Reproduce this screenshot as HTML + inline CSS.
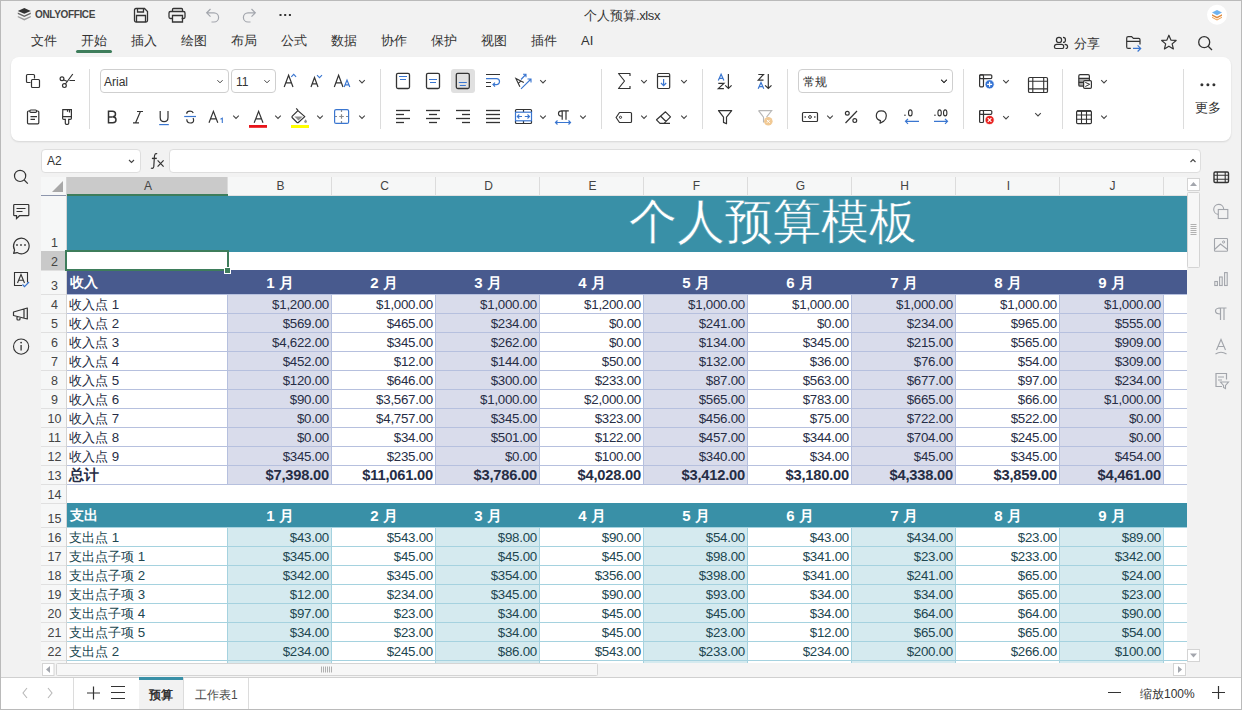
<!DOCTYPE html><html><head><meta charset="utf-8"><style>
*{box-sizing:border-box;margin:0;padding:0}
html,body{width:1242px;height:710px;overflow:hidden;background:#f2f2f2;font-family:"Liberation Sans",sans-serif;color:#333}
.ab{position:absolute}
#frame{position:absolute;left:0;top:0;width:1242px;height:710px;border:1px solid #bababa;pointer-events:none;z-index:50}
.tab{position:absolute;top:33px;font-size:13px;color:#333;line-height:16px}
.panel{position:absolute;left:11px;top:57px;width:1220px;height:84px;background:#fff;border-radius:8px;box-shadow:0 1px 2px rgba(0,0,0,.12)}
.sep{position:absolute;width:1px;background:#dcdcdc}
.ic{position:absolute}
.dd{position:absolute}
.combo{position:absolute;border:1px solid #cfcfcf;border-radius:4px;background:#fff;font-size:12px;color:#333}
.cell{position:absolute;height:19px;font-size:13.3px;line-height:19px;white-space:nowrap;color:#2e3442}
.num{letter-spacing:-0.25px}
.tot{font-weight:bold;font-size:14.7px;letter-spacing:-0.2px;color:#1e2433}
.num{text-align:right}
.rn{position:absolute;left:41px;width:26px;padding-left:1px;text-align:center;font-size:12.5px;color:#444}
.ch{position:absolute;top:177px;height:18px;padding-left:2px;text-align:center;font-size:12px;line-height:18px;color:#444}
</style></head><body>
<div id="frame"></div>
<div class="ab" style="left:35px;top:9px;font-size:10px;font-weight:bold;color:#444;letter-spacing:-0.35px">ONLYOFFICE</div>
<div class="ab" style="left:584px;top:7px;font-size:13px;color:#333">个人预算<span style="letter-spacing:-0.4px">.xlsx</span></div>
<div class="tab" style="left:31px">文件</div>
<div class="tab" style="left:81px">开始</div>
<div class="tab" style="left:131px">插入</div>
<div class="tab" style="left:181px">绘图</div>
<div class="tab" style="left:231px">布局</div>
<div class="tab" style="left:281px">公式</div>
<div class="tab" style="left:331px">数据</div>
<div class="tab" style="left:381px">协作</div>
<div class="tab" style="left:431px">保护</div>
<div class="tab" style="left:481px">视图</div>
<div class="tab" style="left:531px">插件</div>
<div class="tab" style="left:581px">AI</div>
<div class="ab" style="left:76px;top:50px;width:36px;height:3px;border-radius:2px;background:#3e7d5b"></div>
<div class="ab" style="left:1074px;top:35px;font-size:13px;color:#333">分享</div>
<div class="panel"></div>
<div class="sep" style="left:89px;top:69px;height:60px"></div>
<div class="sep" style="left:380px;top:69px;height:60px"></div>
<div class="sep" style="left:601px;top:69px;height:60px"></div>
<div class="sep" style="left:702px;top:69px;height:60px"></div>
<div class="sep" style="left:787px;top:69px;height:60px"></div>
<div class="sep" style="left:963px;top:69px;height:60px"></div>
<div class="sep" style="left:1062px;top:69px;height:60px"></div>
<div class="sep" style="left:1183px;top:69px;height:60px"></div>
<div class="combo" style="left:100px;top:69px;width:129px;height:24px;padding:5px 0 0 3px">Arial</div>
<div class="combo" style="left:231px;top:69px;width:45px;height:24px;padding:5px 0 0 4px">11</div>
<div class="combo" style="left:798px;top:69px;width:155px;height:24px;padding:4px 0 0 4px">常规</div>
<div class="ab" style="left:1195px;top:100px;font-size:12.5px;color:#333">更多</div>
<div class="combo" style="left:41px;top:149px;width:100px;height:24px;padding:4px 0 0 5px;border-color:#dedede">A2</div>
<div class="combo" style="left:169px;top:149px;width:1032px;height:24px;border-color:#dedede"></div>
<div class="ab" style="left:41px;top:177px;width:1146px;height:486px;background:#fff"></div>
<div class="ab" style="left:41px;top:177px;width:1146px;height:18px;background:#f6f7f7"></div>
<div class="ab" style="left:67px;top:177px;width:161px;height:18px;background:#cacaca"></div>
<div class="ch" style="left:67px;width:160px">A</div>
<div class="ab" style="left:227px;top:177px;width:1px;height:18px;background:#dcdcdc"></div>
<div class="ch" style="left:228px;width:103px">B</div>
<div class="ab" style="left:331px;top:177px;width:1px;height:18px;background:#dcdcdc"></div>
<div class="ch" style="left:332px;width:103px">C</div>
<div class="ab" style="left:435px;top:177px;width:1px;height:18px;background:#dcdcdc"></div>
<div class="ch" style="left:436px;width:103px">D</div>
<div class="ab" style="left:539px;top:177px;width:1px;height:18px;background:#dcdcdc"></div>
<div class="ch" style="left:540px;width:103px">E</div>
<div class="ab" style="left:643px;top:177px;width:1px;height:18px;background:#dcdcdc"></div>
<div class="ch" style="left:644px;width:103px">F</div>
<div class="ab" style="left:747px;top:177px;width:1px;height:18px;background:#dcdcdc"></div>
<div class="ch" style="left:748px;width:103px">G</div>
<div class="ab" style="left:851px;top:177px;width:1px;height:18px;background:#dcdcdc"></div>
<div class="ch" style="left:852px;width:103px">H</div>
<div class="ab" style="left:955px;top:177px;width:1px;height:18px;background:#dcdcdc"></div>
<div class="ch" style="left:956px;width:103px">I</div>
<div class="ab" style="left:1059px;top:177px;width:1px;height:18px;background:#dcdcdc"></div>
<div class="ch" style="left:1060px;width:103px">J</div>
<div class="ab" style="left:1163px;top:177px;width:1px;height:18px;background:#dcdcdc"></div>
<div class="ab" style="left:67px;top:195px;width:1120px;height:1px;background:#e2e2e2"></div>
<div class="ab" style="left:41px;top:195px;width:26px;height:1px;background:#8d96ad"></div>
<div class="ab" style="left:67px;top:194px;width:161px;height:2px;background:#3e7d5b"></div>
<div class="ab" style="left:41px;top:196px;width:26px;height:467px;background:#f6f7f7"></div>
<div class="ab" style="left:66px;top:177px;width:1px;height:486px;background:#d4d4d4"></div>
<svg class="ab" style="left:52px;top:181px" width="12" height="12"><path d="M11 0 L11 11 L0 11Z" fill="#a8a8a8"/></svg>
<div class="rn" style="top:236px;line-height:14px">1</div>
<div class="ab" style="left:41px;top:251px;width:25px;height:1px;background:#e0e0e0"></div>
<div class="ab" style="left:41px;top:251px;width:25px;height:19px;background:#c9c9c9"></div>
<div class="rn" style="top:255px;line-height:14px">2</div>
<div class="ab" style="left:41px;top:270px;width:25px;height:1px;background:#e0e0e0"></div>
<div class="rn" style="top:279px;line-height:14px">3</div>
<div class="ab" style="left:41px;top:294px;width:25px;height:1px;background:#e0e0e0"></div>
<div class="rn" style="top:298px;line-height:14px">4</div>
<div class="ab" style="left:41px;top:313px;width:25px;height:1px;background:#e0e0e0"></div>
<div class="rn" style="top:317px;line-height:14px">5</div>
<div class="ab" style="left:41px;top:332px;width:25px;height:1px;background:#e0e0e0"></div>
<div class="rn" style="top:336px;line-height:14px">6</div>
<div class="ab" style="left:41px;top:351px;width:25px;height:1px;background:#e0e0e0"></div>
<div class="rn" style="top:355px;line-height:14px">7</div>
<div class="ab" style="left:41px;top:370px;width:25px;height:1px;background:#e0e0e0"></div>
<div class="rn" style="top:374px;line-height:14px">8</div>
<div class="ab" style="left:41px;top:389px;width:25px;height:1px;background:#e0e0e0"></div>
<div class="rn" style="top:393px;line-height:14px">9</div>
<div class="ab" style="left:41px;top:408px;width:25px;height:1px;background:#e0e0e0"></div>
<div class="rn" style="top:412px;line-height:14px">10</div>
<div class="ab" style="left:41px;top:427px;width:25px;height:1px;background:#e0e0e0"></div>
<div class="rn" style="top:431px;line-height:14px">11</div>
<div class="ab" style="left:41px;top:446px;width:25px;height:1px;background:#e0e0e0"></div>
<div class="rn" style="top:450px;line-height:14px">12</div>
<div class="ab" style="left:41px;top:465px;width:25px;height:1px;background:#e0e0e0"></div>
<div class="rn" style="top:469px;line-height:14px">13</div>
<div class="ab" style="left:41px;top:484px;width:25px;height:1px;background:#e0e0e0"></div>
<div class="rn" style="top:488px;line-height:14px">14</div>
<div class="ab" style="left:41px;top:503px;width:25px;height:1px;background:#e0e0e0"></div>
<div class="rn" style="top:512px;line-height:14px">15</div>
<div class="ab" style="left:41px;top:527px;width:25px;height:1px;background:#e0e0e0"></div>
<div class="rn" style="top:531px;line-height:14px">16</div>
<div class="ab" style="left:41px;top:546px;width:25px;height:1px;background:#e0e0e0"></div>
<div class="rn" style="top:550px;line-height:14px">17</div>
<div class="ab" style="left:41px;top:565px;width:25px;height:1px;background:#e0e0e0"></div>
<div class="rn" style="top:569px;line-height:14px">18</div>
<div class="ab" style="left:41px;top:584px;width:25px;height:1px;background:#e0e0e0"></div>
<div class="rn" style="top:588px;line-height:14px">19</div>
<div class="ab" style="left:41px;top:603px;width:25px;height:1px;background:#e0e0e0"></div>
<div class="rn" style="top:607px;line-height:14px">20</div>
<div class="ab" style="left:41px;top:622px;width:25px;height:1px;background:#e0e0e0"></div>
<div class="rn" style="top:626px;line-height:14px">21</div>
<div class="ab" style="left:41px;top:641px;width:25px;height:1px;background:#e0e0e0"></div>
<div class="rn" style="top:645px;line-height:14px">22</div>
<div class="ab" style="left:41px;top:660px;width:25px;height:1px;background:#e0e0e0"></div>
<div class="ab" style="left:67px;top:196px;width:1120px;height:56px;background:#3990a7"></div>
<div class="ab" style="left:629px;top:190px;font-size:48px;line-height:64px;color:#fff;-webkit-text-stroke:0.5px #3990a7;font-family:'Liberation Serif',serif">个人预算模板</div>
<div class="ab" style="left:67px;top:270px;width:1120px;height:24px;background:#485a8e"></div>
<div class="cell" style="left:70px;top:273px;font-weight:bold;color:#fff;font-size:14px">收入</div>
<div class="cell" style="left:228px;width:103px;top:273px;text-align:center;font-weight:bold;color:#fff;font-size:15px;padding-left:1px">1 月</div>
<div class="cell" style="left:332px;width:103px;top:273px;text-align:center;font-weight:bold;color:#fff;font-size:15px;padding-left:1px">2 月</div>
<div class="cell" style="left:436px;width:103px;top:273px;text-align:center;font-weight:bold;color:#fff;font-size:15px;padding-left:1px">3 月</div>
<div class="cell" style="left:540px;width:103px;top:273px;text-align:center;font-weight:bold;color:#fff;font-size:15px;padding-left:1px">4 月</div>
<div class="cell" style="left:644px;width:103px;top:273px;text-align:center;font-weight:bold;color:#fff;font-size:15px;padding-left:1px">5 月</div>
<div class="cell" style="left:748px;width:103px;top:273px;text-align:center;font-weight:bold;color:#fff;font-size:15px;padding-left:1px">6 月</div>
<div class="cell" style="left:852px;width:103px;top:273px;text-align:center;font-weight:bold;color:#fff;font-size:15px;padding-left:1px">7 月</div>
<div class="cell" style="left:956px;width:103px;top:273px;text-align:center;font-weight:bold;color:#fff;font-size:15px;padding-left:1px">8 月</div>
<div class="cell" style="left:1060px;width:103px;top:273px;text-align:center;font-weight:bold;color:#fff;font-size:15px;padding-left:1px">9 月</div>
<div class="ab" style="left:228px;top:295px;width:103px;height:190px;background:#d9dceb"></div>
<div class="ab" style="left:436px;top:295px;width:103px;height:190px;background:#d9dceb"></div>
<div class="ab" style="left:644px;top:295px;width:103px;height:190px;background:#d9dceb"></div>
<div class="ab" style="left:852px;top:295px;width:103px;height:190px;background:#d9dceb"></div>
<div class="ab" style="left:1060px;top:295px;width:103px;height:190px;background:#d9dceb"></div>
<div class="ab" style="left:67px;top:294px;width:1120px;height:1px;background:#b6c0de"></div>
<div class="ab" style="left:67px;top:313px;width:1120px;height:1px;background:#b6c0de"></div>
<div class="ab" style="left:67px;top:332px;width:1120px;height:1px;background:#b6c0de"></div>
<div class="ab" style="left:67px;top:351px;width:1120px;height:1px;background:#b6c0de"></div>
<div class="ab" style="left:67px;top:370px;width:1120px;height:1px;background:#b6c0de"></div>
<div class="ab" style="left:67px;top:389px;width:1120px;height:1px;background:#b6c0de"></div>
<div class="ab" style="left:67px;top:408px;width:1120px;height:1px;background:#b6c0de"></div>
<div class="ab" style="left:67px;top:427px;width:1120px;height:1px;background:#b6c0de"></div>
<div class="ab" style="left:67px;top:446px;width:1120px;height:1px;background:#b6c0de"></div>
<div class="ab" style="left:67px;top:465px;width:1120px;height:1px;background:#b6c0de"></div>
<div class="ab" style="left:67px;top:484px;width:1120px;height:1px;background:#b6c0de"></div>
<div class="ab" style="left:227px;top:295px;width:1px;height:190px;background:#b6c0de"></div>
<div class="ab" style="left:331px;top:295px;width:1px;height:190px;background:#b6c0de"></div>
<div class="ab" style="left:435px;top:295px;width:1px;height:190px;background:#b6c0de"></div>
<div class="ab" style="left:539px;top:295px;width:1px;height:190px;background:#b6c0de"></div>
<div class="ab" style="left:643px;top:295px;width:1px;height:190px;background:#b6c0de"></div>
<div class="ab" style="left:747px;top:295px;width:1px;height:190px;background:#b6c0de"></div>
<div class="ab" style="left:851px;top:295px;width:1px;height:190px;background:#b6c0de"></div>
<div class="ab" style="left:955px;top:295px;width:1px;height:190px;background:#b6c0de"></div>
<div class="ab" style="left:1059px;top:295px;width:1px;height:190px;background:#b6c0de"></div>
<div class="ab" style="left:1163px;top:295px;width:1px;height:190px;background:#b6c0de"></div>
<div class="cell" style="left:69px;top:295px;color:#262d45">收入点 1</div>
<div class="cell num" style="right:913px;top:295px;color:#262d45">$1,200.00</div>
<div class="cell num" style="right:809px;top:295px;color:#262d45">$1,000.00</div>
<div class="cell num" style="right:705px;top:295px;color:#262d45">$1,000.00</div>
<div class="cell num" style="right:601px;top:295px;color:#262d45">$1,200.00</div>
<div class="cell num" style="right:497px;top:295px;color:#262d45">$1,000.00</div>
<div class="cell num" style="right:393px;top:295px;color:#262d45">$1,000.00</div>
<div class="cell num" style="right:289px;top:295px;color:#262d45">$1,000.00</div>
<div class="cell num" style="right:185px;top:295px;color:#262d45">$1,000.00</div>
<div class="cell num" style="right:81px;top:295px;color:#262d45">$1,000.00</div>
<div class="cell" style="left:69px;top:314px;color:#262d45">收入点 2</div>
<div class="cell num" style="right:913px;top:314px;color:#262d45">$569.00</div>
<div class="cell num" style="right:809px;top:314px;color:#262d45">$465.00</div>
<div class="cell num" style="right:705px;top:314px;color:#262d45">$234.00</div>
<div class="cell num" style="right:601px;top:314px;color:#262d45">$0.00</div>
<div class="cell num" style="right:497px;top:314px;color:#262d45">$241.00</div>
<div class="cell num" style="right:393px;top:314px;color:#262d45">$0.00</div>
<div class="cell num" style="right:289px;top:314px;color:#262d45">$234.00</div>
<div class="cell num" style="right:185px;top:314px;color:#262d45">$965.00</div>
<div class="cell num" style="right:81px;top:314px;color:#262d45">$555.00</div>
<div class="cell" style="left:69px;top:333px;color:#262d45">收入点 3</div>
<div class="cell num" style="right:913px;top:333px;color:#262d45">$4,622.00</div>
<div class="cell num" style="right:809px;top:333px;color:#262d45">$345.00</div>
<div class="cell num" style="right:705px;top:333px;color:#262d45">$262.00</div>
<div class="cell num" style="right:601px;top:333px;color:#262d45">$0.00</div>
<div class="cell num" style="right:497px;top:333px;color:#262d45">$134.00</div>
<div class="cell num" style="right:393px;top:333px;color:#262d45">$345.00</div>
<div class="cell num" style="right:289px;top:333px;color:#262d45">$215.00</div>
<div class="cell num" style="right:185px;top:333px;color:#262d45">$565.00</div>
<div class="cell num" style="right:81px;top:333px;color:#262d45">$909.00</div>
<div class="cell" style="left:69px;top:352px;color:#262d45">收入点 4</div>
<div class="cell num" style="right:913px;top:352px;color:#262d45">$452.00</div>
<div class="cell num" style="right:809px;top:352px;color:#262d45">$12.00</div>
<div class="cell num" style="right:705px;top:352px;color:#262d45">$144.00</div>
<div class="cell num" style="right:601px;top:352px;color:#262d45">$50.00</div>
<div class="cell num" style="right:497px;top:352px;color:#262d45">$132.00</div>
<div class="cell num" style="right:393px;top:352px;color:#262d45">$36.00</div>
<div class="cell num" style="right:289px;top:352px;color:#262d45">$76.00</div>
<div class="cell num" style="right:185px;top:352px;color:#262d45">$54.00</div>
<div class="cell num" style="right:81px;top:352px;color:#262d45">$309.00</div>
<div class="cell" style="left:69px;top:371px;color:#262d45">收入点 5</div>
<div class="cell num" style="right:913px;top:371px;color:#262d45">$120.00</div>
<div class="cell num" style="right:809px;top:371px;color:#262d45">$646.00</div>
<div class="cell num" style="right:705px;top:371px;color:#262d45">$300.00</div>
<div class="cell num" style="right:601px;top:371px;color:#262d45">$233.00</div>
<div class="cell num" style="right:497px;top:371px;color:#262d45">$87.00</div>
<div class="cell num" style="right:393px;top:371px;color:#262d45">$563.00</div>
<div class="cell num" style="right:289px;top:371px;color:#262d45">$677.00</div>
<div class="cell num" style="right:185px;top:371px;color:#262d45">$97.00</div>
<div class="cell num" style="right:81px;top:371px;color:#262d45">$234.00</div>
<div class="cell" style="left:69px;top:390px;color:#262d45">收入点 6</div>
<div class="cell num" style="right:913px;top:390px;color:#262d45">$90.00</div>
<div class="cell num" style="right:809px;top:390px;color:#262d45">$3,567.00</div>
<div class="cell num" style="right:705px;top:390px;color:#262d45">$1,000.00</div>
<div class="cell num" style="right:601px;top:390px;color:#262d45">$2,000.00</div>
<div class="cell num" style="right:497px;top:390px;color:#262d45">$565.00</div>
<div class="cell num" style="right:393px;top:390px;color:#262d45">$783.00</div>
<div class="cell num" style="right:289px;top:390px;color:#262d45">$665.00</div>
<div class="cell num" style="right:185px;top:390px;color:#262d45">$66.00</div>
<div class="cell num" style="right:81px;top:390px;color:#262d45">$1,000.00</div>
<div class="cell" style="left:69px;top:409px;color:#262d45">收入点 7</div>
<div class="cell num" style="right:913px;top:409px;color:#262d45">$0.00</div>
<div class="cell num" style="right:809px;top:409px;color:#262d45">$4,757.00</div>
<div class="cell num" style="right:705px;top:409px;color:#262d45">$345.00</div>
<div class="cell num" style="right:601px;top:409px;color:#262d45">$323.00</div>
<div class="cell num" style="right:497px;top:409px;color:#262d45">$456.00</div>
<div class="cell num" style="right:393px;top:409px;color:#262d45">$75.00</div>
<div class="cell num" style="right:289px;top:409px;color:#262d45">$722.00</div>
<div class="cell num" style="right:185px;top:409px;color:#262d45">$522.00</div>
<div class="cell num" style="right:81px;top:409px;color:#262d45">$0.00</div>
<div class="cell" style="left:69px;top:428px;color:#262d45">收入点 8</div>
<div class="cell num" style="right:913px;top:428px;color:#262d45">$0.00</div>
<div class="cell num" style="right:809px;top:428px;color:#262d45">$34.00</div>
<div class="cell num" style="right:705px;top:428px;color:#262d45">$501.00</div>
<div class="cell num" style="right:601px;top:428px;color:#262d45">$122.00</div>
<div class="cell num" style="right:497px;top:428px;color:#262d45">$457.00</div>
<div class="cell num" style="right:393px;top:428px;color:#262d45">$344.00</div>
<div class="cell num" style="right:289px;top:428px;color:#262d45">$704.00</div>
<div class="cell num" style="right:185px;top:428px;color:#262d45">$245.00</div>
<div class="cell num" style="right:81px;top:428px;color:#262d45">$0.00</div>
<div class="cell" style="left:69px;top:447px;color:#262d45">收入点 9</div>
<div class="cell num" style="right:913px;top:447px;color:#262d45">$345.00</div>
<div class="cell num" style="right:809px;top:447px;color:#262d45">$235.00</div>
<div class="cell num" style="right:705px;top:447px;color:#262d45">$0.00</div>
<div class="cell num" style="right:601px;top:447px;color:#262d45">$100.00</div>
<div class="cell num" style="right:497px;top:447px;color:#262d45">$340.00</div>
<div class="cell num" style="right:393px;top:447px;color:#262d45">$34.00</div>
<div class="cell num" style="right:289px;top:447px;color:#262d45">$45.00</div>
<div class="cell num" style="right:185px;top:447px;color:#262d45">$345.00</div>
<div class="cell num" style="right:81px;top:447px;color:#262d45">$454.00</div>
<div class="cell tot" style="left:69px;top:466px;color:#262d45">总计</div>
<div class="cell num tot" style="right:913px;top:466px;color:#262d45">$7,398.00</div>
<div class="cell num tot" style="right:809px;top:466px;color:#262d45">$11,061.00</div>
<div class="cell num tot" style="right:705px;top:466px;color:#262d45">$3,786.00</div>
<div class="cell num tot" style="right:601px;top:466px;color:#262d45">$4,028.00</div>
<div class="cell num tot" style="right:497px;top:466px;color:#262d45">$3,412.00</div>
<div class="cell num tot" style="right:393px;top:466px;color:#262d45">$3,180.00</div>
<div class="cell num tot" style="right:289px;top:466px;color:#262d45">$4,338.00</div>
<div class="cell num tot" style="right:185px;top:466px;color:#262d45">$3,859.00</div>
<div class="cell num tot" style="right:81px;top:466px;color:#262d45">$4,461.00</div>
<div class="ab" style="left:67px;top:503px;width:1120px;height:24px;background:#3990a7"></div>
<div class="cell" style="left:70px;top:506px;font-weight:bold;color:#fff;font-size:14px">支出</div>
<div class="cell" style="left:228px;width:103px;top:506px;text-align:center;font-weight:bold;color:#fff;font-size:15px;padding-left:1px">1 月</div>
<div class="cell" style="left:332px;width:103px;top:506px;text-align:center;font-weight:bold;color:#fff;font-size:15px;padding-left:1px">2 月</div>
<div class="cell" style="left:436px;width:103px;top:506px;text-align:center;font-weight:bold;color:#fff;font-size:15px;padding-left:1px">3 月</div>
<div class="cell" style="left:540px;width:103px;top:506px;text-align:center;font-weight:bold;color:#fff;font-size:15px;padding-left:1px">4 月</div>
<div class="cell" style="left:644px;width:103px;top:506px;text-align:center;font-weight:bold;color:#fff;font-size:15px;padding-left:1px">5 月</div>
<div class="cell" style="left:748px;width:103px;top:506px;text-align:center;font-weight:bold;color:#fff;font-size:15px;padding-left:1px">6 月</div>
<div class="cell" style="left:852px;width:103px;top:506px;text-align:center;font-weight:bold;color:#fff;font-size:15px;padding-left:1px">7 月</div>
<div class="cell" style="left:956px;width:103px;top:506px;text-align:center;font-weight:bold;color:#fff;font-size:15px;padding-left:1px">8 月</div>
<div class="cell" style="left:1060px;width:103px;top:506px;text-align:center;font-weight:bold;color:#fff;font-size:15px;padding-left:1px">9 月</div>
<div class="ab" style="left:228px;top:528px;width:103px;height:136px;background:#d5eaef"></div>
<div class="ab" style="left:436px;top:528px;width:103px;height:136px;background:#d5eaef"></div>
<div class="ab" style="left:644px;top:528px;width:103px;height:136px;background:#d5eaef"></div>
<div class="ab" style="left:852px;top:528px;width:103px;height:136px;background:#d5eaef"></div>
<div class="ab" style="left:1060px;top:528px;width:103px;height:136px;background:#d5eaef"></div>
<div class="ab" style="left:67px;top:527px;width:1120px;height:1px;background:#a5d2df"></div>
<div class="ab" style="left:67px;top:546px;width:1120px;height:1px;background:#a5d2df"></div>
<div class="ab" style="left:67px;top:565px;width:1120px;height:1px;background:#a5d2df"></div>
<div class="ab" style="left:67px;top:584px;width:1120px;height:1px;background:#a5d2df"></div>
<div class="ab" style="left:67px;top:603px;width:1120px;height:1px;background:#a5d2df"></div>
<div class="ab" style="left:67px;top:622px;width:1120px;height:1px;background:#a5d2df"></div>
<div class="ab" style="left:67px;top:641px;width:1120px;height:1px;background:#a5d2df"></div>
<div class="ab" style="left:67px;top:660px;width:1120px;height:1px;background:#a5d2df"></div>
<div class="ab" style="left:227px;top:528px;width:1px;height:136px;background:#a5d2df"></div>
<div class="ab" style="left:331px;top:528px;width:1px;height:136px;background:#a5d2df"></div>
<div class="ab" style="left:435px;top:528px;width:1px;height:136px;background:#a5d2df"></div>
<div class="ab" style="left:539px;top:528px;width:1px;height:136px;background:#a5d2df"></div>
<div class="ab" style="left:643px;top:528px;width:1px;height:136px;background:#a5d2df"></div>
<div class="ab" style="left:747px;top:528px;width:1px;height:136px;background:#a5d2df"></div>
<div class="ab" style="left:851px;top:528px;width:1px;height:136px;background:#a5d2df"></div>
<div class="ab" style="left:955px;top:528px;width:1px;height:136px;background:#a5d2df"></div>
<div class="ab" style="left:1059px;top:528px;width:1px;height:136px;background:#a5d2df"></div>
<div class="ab" style="left:1163px;top:528px;width:1px;height:136px;background:#a5d2df"></div>
<div class="cell" style="left:69px;top:528px;color:#20464f">支出点 1</div>
<div class="cell num" style="right:913px;top:528px;color:#20464f">$43.00</div>
<div class="cell num" style="right:809px;top:528px;color:#20464f">$543.00</div>
<div class="cell num" style="right:705px;top:528px;color:#20464f">$98.00</div>
<div class="cell num" style="right:601px;top:528px;color:#20464f">$90.00</div>
<div class="cell num" style="right:497px;top:528px;color:#20464f">$54.00</div>
<div class="cell num" style="right:393px;top:528px;color:#20464f">$43.00</div>
<div class="cell num" style="right:289px;top:528px;color:#20464f">$434.00</div>
<div class="cell num" style="right:185px;top:528px;color:#20464f">$23.00</div>
<div class="cell num" style="right:81px;top:528px;color:#20464f">$89.00</div>
<div class="cell" style="left:69px;top:547px;color:#20464f">支出点子项 1</div>
<div class="cell num" style="right:913px;top:547px;color:#20464f">$345.00</div>
<div class="cell num" style="right:809px;top:547px;color:#20464f">$45.00</div>
<div class="cell num" style="right:705px;top:547px;color:#20464f">$45.00</div>
<div class="cell num" style="right:601px;top:547px;color:#20464f">$45.00</div>
<div class="cell num" style="right:497px;top:547px;color:#20464f">$98.00</div>
<div class="cell num" style="right:393px;top:547px;color:#20464f">$341.00</div>
<div class="cell num" style="right:289px;top:547px;color:#20464f">$23.00</div>
<div class="cell num" style="right:185px;top:547px;color:#20464f">$233.00</div>
<div class="cell num" style="right:81px;top:547px;color:#20464f">$342.00</div>
<div class="cell" style="left:69px;top:566px;color:#20464f">支出点子项 2</div>
<div class="cell num" style="right:913px;top:566px;color:#20464f">$342.00</div>
<div class="cell num" style="right:809px;top:566px;color:#20464f">$345.00</div>
<div class="cell num" style="right:705px;top:566px;color:#20464f">$354.00</div>
<div class="cell num" style="right:601px;top:566px;color:#20464f">$356.00</div>
<div class="cell num" style="right:497px;top:566px;color:#20464f">$398.00</div>
<div class="cell num" style="right:393px;top:566px;color:#20464f">$341.00</div>
<div class="cell num" style="right:289px;top:566px;color:#20464f">$241.00</div>
<div class="cell num" style="right:185px;top:566px;color:#20464f">$65.00</div>
<div class="cell num" style="right:81px;top:566px;color:#20464f">$24.00</div>
<div class="cell" style="left:69px;top:585px;color:#20464f">支出点子项 3</div>
<div class="cell num" style="right:913px;top:585px;color:#20464f">$12.00</div>
<div class="cell num" style="right:809px;top:585px;color:#20464f">$234.00</div>
<div class="cell num" style="right:705px;top:585px;color:#20464f">$345.00</div>
<div class="cell num" style="right:601px;top:585px;color:#20464f">$90.00</div>
<div class="cell num" style="right:497px;top:585px;color:#20464f">$93.00</div>
<div class="cell num" style="right:393px;top:585px;color:#20464f">$34.00</div>
<div class="cell num" style="right:289px;top:585px;color:#20464f">$34.00</div>
<div class="cell num" style="right:185px;top:585px;color:#20464f">$65.00</div>
<div class="cell num" style="right:81px;top:585px;color:#20464f">$23.00</div>
<div class="cell" style="left:69px;top:604px;color:#20464f">支出点子项 4</div>
<div class="cell num" style="right:913px;top:604px;color:#20464f">$97.00</div>
<div class="cell num" style="right:809px;top:604px;color:#20464f">$23.00</div>
<div class="cell num" style="right:705px;top:604px;color:#20464f">$34.00</div>
<div class="cell num" style="right:601px;top:604px;color:#20464f">$45.00</div>
<div class="cell num" style="right:497px;top:604px;color:#20464f">$45.00</div>
<div class="cell num" style="right:393px;top:604px;color:#20464f">$34.00</div>
<div class="cell num" style="right:289px;top:604px;color:#20464f">$64.00</div>
<div class="cell num" style="right:185px;top:604px;color:#20464f">$64.00</div>
<div class="cell num" style="right:81px;top:604px;color:#20464f">$90.00</div>
<div class="cell" style="left:69px;top:623px;color:#20464f">支出点子项 5</div>
<div class="cell num" style="right:913px;top:623px;color:#20464f">$34.00</div>
<div class="cell num" style="right:809px;top:623px;color:#20464f">$23.00</div>
<div class="cell num" style="right:705px;top:623px;color:#20464f">$34.00</div>
<div class="cell num" style="right:601px;top:623px;color:#20464f">$45.00</div>
<div class="cell num" style="right:497px;top:623px;color:#20464f">$23.00</div>
<div class="cell num" style="right:393px;top:623px;color:#20464f">$12.00</div>
<div class="cell num" style="right:289px;top:623px;color:#20464f">$65.00</div>
<div class="cell num" style="right:185px;top:623px;color:#20464f">$65.00</div>
<div class="cell num" style="right:81px;top:623px;color:#20464f">$54.00</div>
<div class="cell" style="left:69px;top:642px;color:#20464f">支出点 2</div>
<div class="cell num" style="right:913px;top:642px;color:#20464f">$234.00</div>
<div class="cell num" style="right:809px;top:642px;color:#20464f">$245.00</div>
<div class="cell num" style="right:705px;top:642px;color:#20464f">$86.00</div>
<div class="cell num" style="right:601px;top:642px;color:#20464f">$543.00</div>
<div class="cell num" style="right:497px;top:642px;color:#20464f">$233.00</div>
<div class="cell num" style="right:393px;top:642px;color:#20464f">$234.00</div>
<div class="cell num" style="right:289px;top:642px;color:#20464f">$200.00</div>
<div class="cell num" style="right:185px;top:642px;color:#20464f">$266.00</div>
<div class="cell num" style="right:81px;top:642px;color:#20464f">$100.00</div>
<div class="ab" style="left:65px;top:250px;width:164px;height:21px;border:2px solid #3e7d5b"></div>
<div class="ab" style="left:224px;top:267px;width:7px;height:7px;background:#3e7d5b;border:1px solid #fff"></div>
<div class="ab" style="left:41px;top:663px;width:1146px;height:14px;background:#f4f4f4"></div>
<div class="ab" style="left:0;top:677px;width:1242px;height:33px;background:#fff;border-top:1px solid #d0d0d0"></div>
<div class="ab" style="left:139px;top:677px;width:44px;height:32px;background:#f2f2f2;border-top:3px solid #3990a7"></div>
<div class="ab" style="left:149px;top:687px;font-size:12px;font-weight:bold;color:#333">预算</div>
<div class="ab" style="left:195px;top:687px;font-size:12px;color:#4a4a4a">工作表1</div>
<div class="ab" style="left:1140px;top:686px;font-size:12px;color:#333">缩放100%</div>
<svg class="ab" style="left:0;top:0;z-index:40" width="1242" height="710"><path d="M129 160 l2.5 2.5 l2.5-2.5" fill="none" stroke="#444" stroke-width="1.1"/>
<path d="M1190.5 162 l2.5-2.5 l2.5 2.5" fill="none" stroke="#444" stroke-width="1.1"/>
<path d="M941 80 l3 3 l3-3" fill="none" stroke="#444" stroke-width="1"/>
<path d="M157.2 153.7 q-1.6-0.5-2.2 0.6 q-0.5 0.8-0.6 2.5 l-0.6 9.6 q-0.2 1.8-1.4 1.9 q-0.8 0.1-1.4-0.5" fill="none" stroke="#333" stroke-width="1.2"/><path d="M151.9 158.4 h4.9" stroke="#333" stroke-width="1.4"/><path d="M157.6 160.3 l6 6.3 M163.6 160.3 l-6 6.3" stroke="#333" stroke-width="1.2"/>
<rect x="42.5" y="663.5" width="11.5" height="12" fill="#fff" stroke="#d4d4d4"/><path d="M46 669.5 l4-3.5 v7z" fill="#a3a6ad"/>
<rect x="1173.5" y="663.5" width="12" height="12" fill="#fff" stroke="#d4d4d4"/><path d="M1182 669.5 l-4-3.5 v7z" fill="#a3a6ad"/>
<rect x="1187.5" y="178.5" width="12" height="12" fill="#fff" stroke="#d4d4d4"/><path d="M1193.5 182 l3.5 4 h-7z" fill="#a3a6ad"/>
<rect x="1187.5" y="649.5" width="12" height="12" fill="#fff" stroke="#d4d4d4"/><path d="M1193.5 657.5 l3.5-4 h-7z" fill="#a3a6ad"/>
<rect x="56.5" y="663.5" width="541" height="12" rx="1" fill="#f7f7f7" stroke="#d4d4d4"/>
<path d="M321.5 666.5 v6" stroke="#b0b0b0" stroke-width="1"/>
<path d="M323.5 666.5 v6" stroke="#b0b0b0" stroke-width="1"/>
<path d="M325.5 666.5 v6" stroke="#b0b0b0" stroke-width="1"/>
<path d="M327.5 666.5 v6" stroke="#b0b0b0" stroke-width="1"/>
<path d="M329.5 666.5 v6" stroke="#b0b0b0" stroke-width="1"/>
<path d="M331.5 666.5 v6" stroke="#b0b0b0" stroke-width="1"/>
<rect x="1187.5" y="192.5" width="12" height="75" rx="1" fill="#f7f7f7" stroke="#d4d4d4"/>
<path d="M1190.5 224.5 h6" stroke="#b0b0b0" stroke-width="1"/>
<path d="M1190.5 226.5 h6" stroke="#b0b0b0" stroke-width="1"/>
<path d="M1190.5 228.5 h6" stroke="#b0b0b0" stroke-width="1"/>
<path d="M1190.5 230.5 h6" stroke="#b0b0b0" stroke-width="1"/>
<path d="M1190.5 232.5 h6" stroke="#b0b0b0" stroke-width="1"/>
<path d="M1190.5 234.5 h6" stroke="#b0b0b0" stroke-width="1"/>
<path d="M27 688 l-4 5 l4 5 M48 688 l4 5 l-4 5" fill="none" stroke="#b8b8b8" stroke-width="1.1"/>
<path d="M73.5 678 v32 M183.5 678 v32 M248.5 678 v32" stroke="#dcdcdc"/>
<path d="M93.5 686.5 v13 M87 693 h13" stroke="#333" stroke-width="1.2"/>
<path d="M111 686.5 h14 M111 692.5 h14 M111 698.5 h14" stroke="#333" stroke-width="1"/>
<path d="M1108 692.5 h13 M1212 692.5 h13 M1218.5 686 v13" stroke="#333" stroke-width="1.2"/><path d="M134.5 10 q0-1.5 1.5-1.5 h8.5 l3 3 v9 q0 1.5-1.5 1.5 h-10 q-1.5 0-1.5-1.5z M137.5 8.5 v3.5 h6 v-3.5 M136.5 21.5 v-6 h9 v6" fill="none" stroke="#333" stroke-width="1.3"/>
<path d="M172.5 11.5 v-2 q0-1 1-1 h8 q1 0 1 1 v2 M172.5 18.5 h-2 q-1.5 0-1.5-1.5 v-4 q0-1.5 1.5-1.5 h13 q1.5 0 1.5 1.5 v4 q0 1.5-1.5 1.5 h-2 M172.5 15.5 h10 v6.5 h-10z" fill="none" stroke="#333" stroke-width="1.3"/>
<path d="M210.5 9 l-3.8 3.8 l3.8 3.8 M207 12.8 h7 a4.6 4.6 0 0 1 0 9.2 h-2.5" fill="none" stroke="#a3a6ad" stroke-width="1.2"/>
<path d="M251.5 9 l3.8 3.8 l-3.8 3.8 M255 12.8 h-7 a4.6 4.6 0 0 0 0 9.2 h2.5" fill="none" stroke="#a3a6ad" stroke-width="1.2"/>
<rect x="279.5" y="14" width="2" height="2" fill="#333"/>
<rect x="284.2" y="14" width="2" height="2" fill="#333"/>
<rect x="288.9" y="14" width="2" height="2" fill="#333"/>
<path d="M24.3 8 L30.8 10.9 L24.3 13.8 L17.8 10.9Z" fill="#333"/>
<path d="M17.8 12.6 L24.3 15.5 L30.8 12.6 V14 L24.3 17 L17.8 14Z" fill="#666"/>
<path d="M17.8 15.9 L24.3 18.8 L30.8 15.9 V17.3 L24.3 20.4 L17.8 17.3Z" fill="#9c9c9c"/>
<circle cx="1217" cy="14.8" r="10" fill="#fff"/>
<path d="M1217 10 l5 2.6 l-5 2.6 l-5-2.6z" fill="#6fb3f0"/>
<path d="M1212 14.2 l5 2.6 l5-2.6 v1.6 l-5 2.6 l-5-2.6z" fill="#e08a3c"/>
<path d="M1212 16.8 l5 2.6 l5-2.6 v1 l-5 2.6 l-5-2.6z" fill="#f0a050"/>
<circle cx="1059" cy="39.9" r="2.6" fill="none" stroke="#333" stroke-width="1.2"/><path d="M1063 37.4 a2.5 2.5 0 0 1 0 5" fill="none" stroke="#333" stroke-width="1.2"/>
<path d="M1056.8 44.4 h4.6 q2.3 0 2.3 2 q0 2.1-1.6 2.1 h-6.2 q-1.5 0-1.5-1.7 q0-2.4 2.4-2.4z M1064.6 44.4 q3 0.2 3 2.3 q0 1.8-2 1.8" fill="none" stroke="#333" stroke-width="1.2"/>
<path d="M1130.8 48.4 h-2.6 q-1.5 0-1.5-1.5 v-8.8 q0-1.5 1.5-1.5 h3.4 l1.8 1.8 h5.3 q1.3 0 1.3 1.3 v4.9 M1126.7 41.3 h12.7" fill="none" stroke="#333" stroke-width="1.2"/>
<path d="M1133 48.4 h7.6 M1137.6 45.3 l3.1 3.1 l-3.1 3.1" fill="none" stroke="#3a76d0" stroke-width="1.2"/>
<polygon points="1168.90,35.20 1170.90,40.05 1176.13,40.45 1172.13,43.85 1173.37,48.95 1168.90,46.20 1164.43,48.95 1165.67,43.85 1161.67,40.45 1166.90,40.05" fill="none" stroke="#333" stroke-width="1.2" stroke-linejoin="round"/>
<circle cx="1204.2" cy="42.2" r="5.5" fill="none" stroke="#333" stroke-width="1.3"/><path d="M1208.2 46.2 L1212 50" stroke="#333" stroke-width="1.3"/>
<path d="M34.5 78.5 v-3 q0-1-1-1 h-6 q-1 0-1 1 v6 q0 1 1 1 h3" fill="none" stroke="#333" stroke-width="1.2"/><rect x="31.5" y="79.5" width="8" height="8" rx="1" fill="none" stroke="#333" stroke-width="1.2"/>
<circle cx="62" cy="78.8" r="1.9" fill="none" stroke="#333" stroke-width="1.2"/><circle cx="64.4" cy="85.6" r="1.9" fill="none" stroke="#333" stroke-width="1.2"/><path d="M63.8 80 L67 81.2 M65.4 84 L72.8 74 M69.4 80.5 H75" fill="none" stroke="#333" stroke-width="1.2"/>
<path d="M30 111 h-1.5 q-1 0-1 1 v10.8 q0 1 1 1 h9.3 q1 0 1-1 v-10.8 q0-1-1-1 h-1.5" fill="none" stroke="#333" stroke-width="1.2"/><rect x="29.8" y="110" width="6.8" height="2.3" rx="1" fill="none" stroke="#333" stroke-width="1.2"/><path d="M30.5 116.6 h6.5 M30.5 119.3 h4.5" stroke="#333" stroke-width="1.2"/>
<path d="M62.8 109.6 h8.6 v8.6 q0 1.2-1.2 1.2 h-1.5 v3.8 q0 1.2-1.2 1.2 h-1 q-1.2 0-1.2-1.2 v-3.8 h-1.5 q-1.2 0-1.2-1.2z M62.8 116.6 h8.6 M67.5 109.6 v2.2 M69.5 109.6 v3" fill="none" stroke="#333" stroke-width="1.2"/>
<path d="M217.4 80.2 l2.6 2.6 l2.6-2.6 M264.4 80.2 l2.6 2.6 l2.6-2.6" fill="none" stroke="#444" stroke-width="1"/>
<path d="M284.2 87 L288.6 75.3 L293 87 M285.8 82.8 H291.4" fill="none" stroke="#333" stroke-width="1.2"/><path d="M291.3 76.8 l2.4-2.5 l2.4 2.5" fill="none" stroke="#3a76d0" stroke-width="1.1"/>
<path d="M311 87 L314.5 77.5 L318 87 M312.3 83.8 H316.7" fill="none" stroke="#333" stroke-width="1.2"/><path d="M317 75.2 l2.5 2.5 l2.5-2.5" fill="none" stroke="#3a76d0" stroke-width="1.1"/>
<path d="M334.3 87 L338.6 75.3 L343 87 M335.9 82.8 H341.3" fill="none" stroke="#333" stroke-width="1.2"/><path d="M344.2 87 L347 80 L349.8 87 M345.2 84.8 H348.8" fill="none" stroke="#3a76d0" stroke-width="1.2"/>
<path d="M359.2 80.1 l2.8 2.8 l2.8-2.8" fill="none" stroke="#444" stroke-width="1.05"/>
<path d="M108.5 111.3 h4 q3 0 3 2.8 q0 2.5-2.8 2.7 q3.3 0.2 3.3 3 q0 3-3.3 3 h-4.2z M108.5 116.9 h4" fill="none" stroke="#333" stroke-width="1.5"/>
<path d="M137 111.5 h6 M133 122.8 h6 M140.4 111.5 L135.6 122.8" fill="none" stroke="#333" stroke-width="1.2"/>
<path d="M160.2 111 v6.5 q0 4.2 3.9 4.2 q3.9 0 3.9-4.2 v-6.5" fill="none" stroke="#333" stroke-width="1.2"/><path d="M159.2 124.6 h9.6" stroke="#3a76d0" stroke-width="1.2"/>
<path d="M193.3 113 q-1-1.8-3.3-1.8 q-3.3 0-3.3 2.6 M186.8 119.3 q0 3.7 3.4 3.7 q3.4 0 3.4-2.8 q0-1.2-0.6-2" fill="none" stroke="#333" stroke-width="1.2"/><path d="M184.2 116.5 h11.8" stroke="#3a76d0" stroke-width="1.2"/>
<path d="M209 122.8 L213.4 111.4 L217.8 122.8 M210.6 118.8 H216.2" fill="none" stroke="#333" stroke-width="1.2"/><path d="M220.5 119.2 l1.8-1 v4.8" fill="none" stroke="#3a76d0" stroke-width="1.1"/>
<path d="M233.2 115.6 l2.8 2.8 l2.8-2.8" fill="none" stroke="#444" stroke-width="1.05"/>
<path d="M254.2 122.8 L258.6 111.4 L263 122.8 M255.8 118.8 H261.4" fill="none" stroke="#333" stroke-width="1.2"/><rect x="249" y="125" width="18" height="2.8" fill="#e8141a"/>
<path d="M275.2 115.6 l2.8 2.8 l2.8-2.8" fill="none" stroke="#444" stroke-width="1.05"/>
<path d="M296.2 108.3 L298 110.3 M297.9 110.6 L304.8 116.6 L298.6 122.2 q-0.9 0.8-1.8 0 L292.3 117.8 q-0.8-0.8 0-1.6z" fill="none" stroke="#333" stroke-width="1.2" stroke-linejoin="round"/><path d="M294.3 116.4 h8.4 l-4.2 4.2z" fill="#8f8f8f"/><path d="M305.6 119.2 q-1.4 1.6-1.4 2.4 q0 1.3 1.4 1.3 q1.4 0 1.4-1.3 q0-0.8-1.4-2.4z" fill="#8f8f8f"/><rect x="291" y="125" width="18" height="3" fill="#ffff00"/>
<path d="M317.2 115.6 l2.8 2.8 l2.8-2.8" fill="none" stroke="#444" stroke-width="1.05"/>
<path d="M341.5 110 v2 M341.5 121 v2.2 M335 116.5 h2 M346 116.5 h2.2 M339.2 116.5 h4.6 M341.5 114.2 v4.6" stroke="#8a8a8a" stroke-width="1.2"/><rect x="334.6" y="109.6" width="14" height="13.8" rx="1.5" fill="none" stroke="#3a76d0" stroke-width="1.2"/>
<path d="M359.2 115.6 l2.8 2.8 l2.8-2.8" fill="none" stroke="#444" stroke-width="1.05"/>
<rect x="396.5" y="73.3" width="13" height="15.2" rx="1.5" fill="none" stroke="#333" stroke-width="1.3"/><path d="M399.0 76.5 h8 M400.0 79.5 h6" stroke="#3a76d0" stroke-width="1.2"/>
<rect x="426.5" y="73.3" width="13" height="15.2" rx="1.5" fill="none" stroke="#333" stroke-width="1.3"/><path d="M429.0 79.5 h8 M430.0 82.5 h6" stroke="#3a76d0" stroke-width="1.2"/>
<rect x="451" y="69" width="24" height="24" rx="3" fill="#e0e0e0"/>
<rect x="456.3" y="73.3" width="13" height="15.2" rx="1.5" fill="none" stroke="#333" stroke-width="1.3"/><path d="M458.8 82.5 h8 M459.8 85.5 h6" stroke="#3a76d0" stroke-width="1.2"/>
<path d="M486 74.5 h14 M486 82.5 h5 M486 86.5 h5" stroke="#333" stroke-width="1.2"/><path d="M486 78.6 h10.5 a3 3 0 0 1 0 6 h-3 M495 82.6 l-2 2 l2 2" fill="none" stroke="#3a76d0" stroke-width="1.2"/>
<path d="M519.9 86.8 L515.9 78.6 L523.8 82.6 M518.2 83.4 L520.8 81.2" fill="none" stroke="#333" stroke-width="1.1" stroke-linejoin="miter"/><path d="M521 88.8 L531 79 M527.5 79 h3.5 v3.5 M521 79.5 L525.8 74.5 M523 74.2 h3 v3" fill="none" stroke="#3a76d0" stroke-width="1.1"/>
<path d="M540.2 80.1 l2.8 2.8 l2.8-2.8" fill="none" stroke="#444" stroke-width="1.05"/>
<path d="M396 110.5 H410" stroke="#333" stroke-width="1.3"/>
<path d="M396 114.5 H404" stroke="#333" stroke-width="1.3"/>
<path d="M396 118.5 H410" stroke="#333" stroke-width="1.3"/>
<path d="M396 122.5 H404" stroke="#333" stroke-width="1.3"/>
<path d="M426 110.5 H440" stroke="#333" stroke-width="1.3"/>
<path d="M429 114.5 H437" stroke="#333" stroke-width="1.3"/>
<path d="M426 118.5 H440" stroke="#333" stroke-width="1.3"/>
<path d="M429 122.5 H437" stroke="#333" stroke-width="1.3"/>
<path d="M456 110.5 H470" stroke="#333" stroke-width="1.3"/>
<path d="M462 114.5 H470" stroke="#333" stroke-width="1.3"/>
<path d="M456 118.5 H470" stroke="#333" stroke-width="1.3"/>
<path d="M462 122.5 H470" stroke="#333" stroke-width="1.3"/>
<path d="M486 110.5 H500" stroke="#333" stroke-width="1.3"/>
<path d="M486 114.5 H500" stroke="#333" stroke-width="1.3"/>
<path d="M486 118.5 H500" stroke="#333" stroke-width="1.3"/>
<path d="M486 122.5 H500" stroke="#333" stroke-width="1.3"/>
<path d="M515.5 112 v-1.5 q0-1 1-1 h14 q1 0 1 1 v1.5 M515.5 121 v1.5 q0 1 1 1 h14 q1 0 1-1 v-1.5 M523.5 109.5 v2.5 M523.5 121 v2.5" fill="none" stroke="#333" stroke-width="1.2"/><rect x="515.5" y="112.2" width="16" height="8.6" fill="none" stroke="#3a76d0" stroke-width="1.2"/><path d="M517.3 116.5 h4.7 M519.3 114.5 l-2 2 l2 2 M524.8 116.5 h4.7 M527.5 114.5 l2 2 l-2 2" fill="none" stroke="#3a76d0" stroke-width="1.1"/>
<path d="M540.2 115.6 l2.8 2.8 l2.8-2.8" fill="none" stroke="#444" stroke-width="1.05"/>
<path d="M561 110.8 h7.8 M562.2 110.8 v9 M566 110.8 v9 M562 110.8 q-3.5 0-3.5 2.6 q0 2.6 3.5 2.6" fill="none" stroke="#333" stroke-width="1.2"/><path d="M555.5 122.5 h15 M557.5 120.5 l-2 2 l2 2 M568.5 120.5 l2 2 l-2 2" fill="none" stroke="#3a76d0" stroke-width="1.2"/>
<path d="M580.2 115.6 l2.8 2.8 l2.8-2.8" fill="none" stroke="#444" stroke-width="1.05"/>
<path d="M630 76 v-2.5 h-11.5 l6 7.5 l-6 7.5 h11.5 v-2.5" fill="none" stroke="#333" stroke-width="1.2" stroke-linejoin="round"/>
<path d="M641.2 80.1 l2.8 2.8 l2.8-2.8" fill="none" stroke="#444" stroke-width="1.05"/>
<rect x="657.5" y="73.5" width="12.2" height="15" rx="1.2" fill="none" stroke="#333" stroke-width="1.2"/><path d="M657.5 76.5 h12.2" stroke="#333" stroke-width="1.2"/><path d="M663.6 79 v6.5 M661 83 l2.6 2.6 l2.6-2.6" fill="none" stroke="#3a76d0" stroke-width="1.2"/>
<path d="M681.2 80.1 l2.8 2.8 l2.8-2.8" fill="none" stroke="#444" stroke-width="1.05"/>
<path d="M619.5 112.5 h11 q1 0 1 1 v8 q0 1-1 1 h-11 l-3.4-5z" fill="none" stroke="#333" stroke-width="1.2" stroke-linejoin="round"/><circle cx="620.5" cy="117.3" r="1.1" fill="none" stroke="#333" stroke-width="1"/>
<path d="M641.2 115.6 l2.8 2.8 l2.8-2.8" fill="none" stroke="#444" stroke-width="1.05"/>
<path d="M665.5 111.8 l5 5 l-6.5 6.5 h-4 l-3.5-3.5z M661 116.5 l5 5 M663.7 123.3 H670" fill="none" stroke="#333" stroke-width="1.2" stroke-linejoin="round"/>
<path d="M681.2 115.6 l2.8 2.8 l2.8-2.8" fill="none" stroke="#444" stroke-width="1.05"/>
<path d="M718.3 80.5 L721.0999999999999 74.3 L723.9 80.5 M719.42 78.33 H722.78" fill="none" stroke="#3a76d0" stroke-width="1.2"/>
<path d="M718.3 83.4 H723.9 L718.3 88.60000000000001 H723.9" fill="none" stroke="#333" stroke-width="1.2"/>
<path d="M728.4 74 v14.5 M725.2 85.3 l3.2 3.2 l3.2-3.2" fill="none" stroke="#333" stroke-width="1.2"/>
<path d="M758.3 74.5 H763.5 L758.3 80.1 H763.5" fill="none" stroke="#333" stroke-width="1.2"/>
<path d="M758.2 88.7 L761.0 82.5 L763.8000000000001 88.7 M759.32 86.53 H762.6800000000001" fill="none" stroke="#3a76d0" stroke-width="1.2"/>
<path d="M768.3 74 v14.5 M765.1 85.3 l3.2 3.2 l3.2-3.2" fill="none" stroke="#333" stroke-width="1.2"/>
<path d="M718.5 110.6 h13.2 l-5.2 6.5 v6.6 l-3-1.3 v-5.3z" fill="none" stroke="#333" stroke-width="1.2" stroke-linejoin="round"/>
<path d="M758.5 110.6 h13.2 l-5.2 6.5 M758.5 110.6 l5 6.5 v5.5" fill="none" stroke="#b8b8b8" stroke-width="1.1"/><circle cx="768.3" cy="121.3" r="4.3" fill="#f1c994"/><path d="M766.8 119.8 l3 3 M769.8 119.8 l-3 3" stroke="#fff" stroke-width="1"/>
<rect x="802.5" y="112.5" width="15" height="9" rx="1" fill="none" stroke="#333" stroke-width="1.2"/><circle cx="810" cy="117" r="1.4" fill="none" stroke="#333" stroke-width="1"/><rect x="804.5" y="116.3" width="1.4" height="1.4" fill="#333"/><rect x="814.1" y="116.3" width="1.4" height="1.4" fill="#333"/>
<path d="M827.2 115.6 l2.8 2.8 l2.8-2.8" fill="none" stroke="#444" stroke-width="1.05"/>
<circle cx="847.3" cy="113.3" r="1.9" fill="none" stroke="#333" stroke-width="1.2"/><circle cx="854.8" cy="120.6" r="1.9" fill="none" stroke="#333" stroke-width="1.2"/><path d="M845.5 123 L857 111" stroke="#333" stroke-width="1.2"/>
<path d="M880 123.2 l0.5-2.6 q-4.2-1-4.2-4.8 q0-5 5-5 q5 0 5 5 q0 3.5-2.5 5.3z" fill="none" stroke="#333" stroke-width="1.2" stroke-linejoin="round"/>
<rect x="904.3" y="114.6" width="1.3" height="1.3" fill="#333"/><ellipse cx="910.3" cy="112.9" rx="1.8" ry="3" fill="none" stroke="#333" stroke-width="1.1"/><path d="M905.5 121.3 h13.5 M908 118.8 l-2.5 2.5 l2.5 2.5" fill="none" stroke="#3a76d0" stroke-width="1.2"/>
<rect x="934.3" y="114.6" width="1.3" height="1.3" fill="#333"/><ellipse cx="939.6" cy="112.9" rx="1.7" ry="3" fill="none" stroke="#333" stroke-width="1.1"/><ellipse cx="945.2" cy="112.9" rx="1.7" ry="3" fill="none" stroke="#333" stroke-width="1.1"/><path d="M934 121.3 h13.5 M945 118.8 l2.5 2.5 l-2.5 2.5" fill="none" stroke="#3a76d0" stroke-width="1.2"/>
<path d="M941.2 79.6 l2.8 2.8 l2.8-2.8" fill="none" stroke="#444" stroke-width="1.05"/>
<rect x="979.6" y="74.8" width="12.2" height="3.8" rx="1" fill="none" stroke="#333" stroke-width="1.2"/><rect x="979.6" y="74.8" width="3.9" height="12" rx="1" fill="none" stroke="#333" stroke-width="1.2"/>
<circle cx="989.6" cy="84.3" r="4.6" fill="#3573d3" stroke="#fff" stroke-width="0.8"/>
<path d="M987.1 84.3 h5 M989.6 81.8 v5" stroke="#fff" stroke-width="1.2"/>
<rect x="979.6" y="110.5" width="12.2" height="3.8" rx="1" fill="none" stroke="#333" stroke-width="1.2"/><rect x="979.6" y="110.5" width="3.9" height="12" rx="1" fill="none" stroke="#333" stroke-width="1.2"/>
<circle cx="989.6" cy="120" r="4.6" fill="#e8201e" stroke="#fff" stroke-width="0.8"/>
<path d="M987.8000000000001 118.2 l3.6 3.6 M991.4 118.2 l-3.6 3.6" stroke="#fff" stroke-width="1.2"/>
<path d="M1003.2 80.1 l2.8 2.8 l2.8-2.8" fill="none" stroke="#444" stroke-width="1.05"/>
<path d="M1003.2 116.1 l2.8 2.8 l2.8-2.8" fill="none" stroke="#444" stroke-width="1.05"/>
<rect x="1028.5" y="77.5" width="19" height="15" rx="1.3" fill="none" stroke="#333" stroke-width="1.2"/><path d="M1032.8 77.5 v15 M1043.7 77.5 v15 M1028.5 81.3 h19 M1028.5 88.9 h19" stroke="#333" stroke-width="1.1"/>
<path d="M1035.2 113.1 l2.8 2.8 l2.8-2.8" fill="none" stroke="#444" stroke-width="1.05"/>
<rect x="1078.8" y="78.6" width="10.4" height="7.4" fill="#a9a9a9"/><rect x="1078.8" y="74.6" width="10.6" height="11.6" rx="1.3" fill="none" stroke="#333" stroke-width="1.2"/><path d="M1078.8 78.4 h10.6 M1078.8 82.4 h5" stroke="#333" stroke-width="1.1"/><rect x="1083.6" y="80.6" width="7.8" height="7.8" rx="1.2" fill="#fff" stroke="#333" stroke-width="1.2"/><path d="M1085.3 82.4 l4.4 1.9 l-4.4 2.2" fill="none" stroke="#333" stroke-width="1"/>
<path d="M1101.2 80.1 l2.8 2.8 l2.8-2.8" fill="none" stroke="#444" stroke-width="1.05"/>
<rect x="1076.6" y="110.8" width="14.8" height="12.8" rx="1.2" fill="none" stroke="#333" stroke-width="1.2"/><path d="M1081.5 111 v12.5 M1086.5 111 v12.5 M1076.6 115 h14.8 M1076.6 119.3 h14.8" stroke="#333" stroke-width="1.1"/><path d="M1077 111 h14" stroke="#333" stroke-width="1.6"/>
<path d="M1101.2 115.6 l2.8 2.8 l2.8-2.8" fill="none" stroke="#444" stroke-width="1.05"/>
<circle cx="1201.9" cy="84.8" r="1.5" fill="#333"/>
<circle cx="1207.9" cy="84.8" r="1.5" fill="#333"/>
<circle cx="1213.9" cy="84.8" r="1.5" fill="#333"/>
<circle cx="20.1" cy="175.9" r="5.6" fill="none" stroke="#333" stroke-width="1.2"/><path d="M24.2 180 l3.6 3.6" stroke="#333" stroke-width="1.2"/>
<path d="M14.5 204.5 h13.5 q0.8 0 0.8 0.8 v9.6 q0 0.8-0.8 0.8 h-8.5 l-3 2.8 v-2.8 h-2 q-0.8 0-0.8-0.8 v-9.6 q0-0.8 0.8-0.8z M16.5 208.5 h9 M16.5 211.5 h6" fill="none" stroke="#333" stroke-width="1.2"/>
<path d="M14.6 250 a7.8 7.8 0 1 1 2.5 2.6 l-3.5 0.8z" fill="none" stroke="#333" stroke-width="1.2" stroke-linejoin="round"/>
<rect x="16.2" y="244.2" width="1.6" height="1.6" fill="#333"/>
<rect x="20.2" y="244.2" width="1.6" height="1.6" fill="#333"/>
<rect x="24.2" y="244.2" width="1.6" height="1.6" fill="#333"/>
<path d="M22 285.5 h-7.5 v-13 h13 v10" fill="none" stroke="#333" stroke-width="1.1"/><path d="M17.5 283 L21 274.5 L24.5 283 M18.7 280.3 h4.6" fill="none" stroke="#333" stroke-width="1.1"/><path d="M22.5 284.5 l2 2.2 l4.5-4.7" fill="none" stroke="#3a76d0" stroke-width="1.2"/>
<path d="M13.5 312 l13.8-4 v11 l-13.8-3.5z M24 309 v9 M17 316.5 v2.5 q0 1 1 1 h1 q1 0 1-1 v-1.8" fill="none" stroke="#333" stroke-width="1.2" stroke-linejoin="round"/>
<circle cx="21.1" cy="346.6" r="7.6" fill="none" stroke="#333" stroke-width="1.1"/><path d="M21.1 345 v5.5" stroke="#333" stroke-width="1.3"/><circle cx="21.1" cy="342.6" r="0.9" fill="#333"/>
<rect x="1214" y="172" width="14.5" height="10.5" rx="1.2" fill="none" stroke="#333" stroke-width="1.4"/><path d="M1217.3 172 v10.5 M1225.2 172 v10.5 M1214 175.3 h14.5 M1214 179.2 h14.5" stroke="#333" stroke-width="1.1"/>
<path d="M1223.7 209 a5 5 0 1 0 -5.4 5.4" fill="none" stroke="#a2a5ab" stroke-width="1.1"/><rect x="1218.3" y="209.5" width="9.5" height="9" fill="none" stroke="#a2a5ab" stroke-width="1.1"/>
<rect x="1214.5" y="238.5" width="13" height="12.8" rx="0.8" fill="none" stroke="#a2a5ab" stroke-width="1.1"/><path d="M1214.5 249.5 l6-5.5 l7 5.5" fill="none" stroke="#a2a5ab" stroke-width="1.1"/><circle cx="1223.6" cy="242" r="1.1" fill="none" stroke="#a2a5ab" stroke-width="1"/>
<rect x="1214.8" y="281.5" width="2.6" height="4" fill="none" stroke="#a2a5ab" stroke-width="1.1"/><rect x="1219.6" y="277" width="2.6" height="8.5" fill="none" stroke="#a2a5ab" stroke-width="1.1"/><rect x="1224.6" y="272.6" width="2.6" height="12.9" fill="none" stroke="#a2a5ab" stroke-width="1.1"/>
<path d="M1218.5 308 h8 M1220.5 308 v12 M1224 308 v12 M1220.5 308 q-5 0-5 3 q0 3 5 3" fill="none" stroke="#a2a5ab" stroke-width="1.2"/>
<path d="M1216.5 350 L1221 339.5 L1225.5 350 M1218 346.5 h6 M1215.5 354 q5.5-3.5 11 0" fill="none" stroke="#a2a5ab" stroke-width="1.1"/>
<path d="M1222 386.5 h-6 v-13 h10.5 v6 M1218 377 h6 M1218 380 h4" fill="none" stroke="#a2a5ab" stroke-width="1.2"/><path d="M1220.5 382 h8 l-3 3.5 v3 l-2-1 v-2z" fill="none" stroke="#a2a5ab" stroke-width="1.1"/></svg>
</body></html>
